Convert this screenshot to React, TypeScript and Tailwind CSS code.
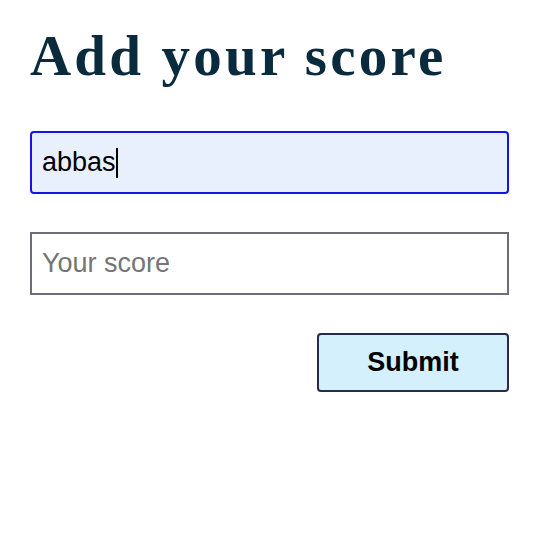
export default function App() {
  return (
    <main className="min-h-screen bg-white px-[30px] pt-[27px]">
      {/* Title */}
      <h1 className="text-[57px] leading-none font-bold tracking-[3.2px] text-[#0a2a3d] font-['Liberation_Serif',serif]">
        Add your score
      </h1>

      <form className="mt-[47px] w-[479px] flex flex-col gap-[38px] font-['Liberation_Sans',Arial,sans-serif]">
        {/* Name field (focused, autofilled) */}
        <div className="h-[63px] rounded-[4px] border-2 border-[#1414e6] bg-[#e8f0fe] px-[10px] flex items-center text-[27px] text-black">
          <span>abbas</span>
          <span className="w-[2px] h-[30px] bg-black" />
        </div>

        {/* Score field */}
        <input
          type="text"
          placeholder="Your score"
          className="h-[63px] border-2 border-[#6e6c7c] px-[10px] text-[27px] text-black placeholder:text-[#757575] outline-none"
        />

        <div className="flex justify-end">
          <button
            type="button"
            className="w-[192px] h-[59px] rounded-[4px] border-2 border-[#2a2a48] bg-[#d3f0fc] text-[27px] font-bold text-black"
          >
            Submit
          </button>
        </div>
      </form>
    </main>
  );
}
